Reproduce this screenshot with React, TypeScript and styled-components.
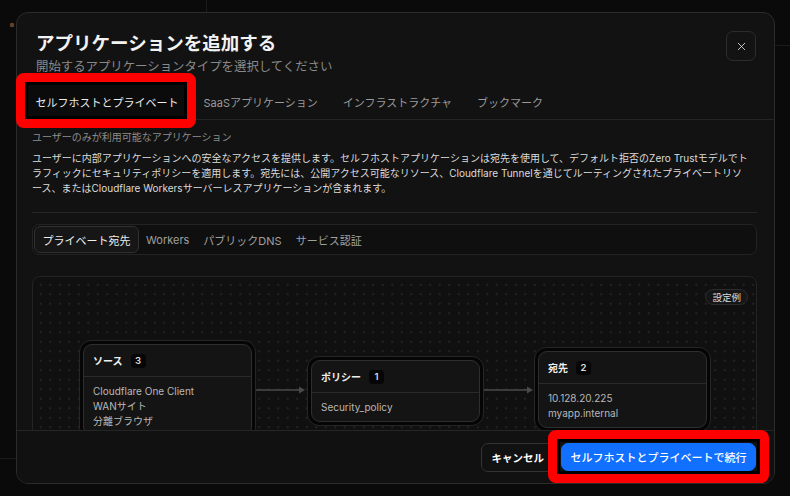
import React from "react";
import styled, { createGlobalStyle } from "styled-components";
import { X } from "lucide-react";

const GlobalStyle = createGlobalStyle`
  html, body {
    margin: 0;
    padding: 0;
    background: #0a0a0a;
  }
  body {
    font-family: "Inter", "Noto Sans CJK JP", sans-serif;
    -webkit-font-smoothing: antialiased;
  }
  * {
    box-sizing: border-box;
  }
`;

/* 背後のページ（うっすら見える線とロゴ） */
const Page = styled.div`
  position: relative;
  width: 790px;
  height: 496px;
  overflow: hidden;
  padding: 12px 15px 12px 16px;
  background-color: #0a0a0a;
  background-image:
    radial-gradient(circle at 12px 25px, #5e4126 0 2px, transparent 2.6px),
    linear-gradient(#1b1b1b, #1b1b1b),
    linear-gradient(#1b1b1b, #1b1b1b),
    linear-gradient(#1b1b1b, #1b1b1b);
  background-repeat: no-repeat;
  background-size: 100% 100%, 1px 12px, 15px 1px, 16px 1px;
  background-position: 0 0, 206px 0, 775px 45px, 0 458px;
`;

/* ダイアログ本体 */
const Modal = styled.div`
  width: 759px;
  height: 472px;
  display: flex;
  flex-direction: column;
  background: #121212;
  border: 1px solid #2b2b2b;
  border-radius: 12px;
  overflow: hidden;
`;

const Header = styled.header`
  display: flex;
  justify-content: space-between;
  align-items: flex-start;
  padding: 17px 18px 0 19px;
`;

const Title = styled.h1`
  margin: 0;
  font-size: 18.5px;
  line-height: 26px;
  font-weight: 700;
  color: #f2f2f2;
`;

const Subtitle = styled.p`
  margin: 2px 0 0;
  font-size: 12.4px;
  line-height: 18px;
  color: #8a8a8a;
`;

const CloseButton = styled.button`
  width: 30px;
  height: 30px;
  margin-top: 1px;
  padding: 0;
  display: flex;
  align-items: center;
  justify-content: center;
  border: 1px solid #2c2c2c;
  border-radius: 7px;
  background: #131313;
  color: #dcdcdc;
`;

/* 上部タブ */
const Tabs = styled.nav`
  display: flex;
  gap: 6px;
  margin-top: 8px;
  padding: 0 9px;
  border-bottom: 1px solid #242424;
`;

const Tab = styled.div<{ $active?: boolean }>`
  position: relative;
  height: 35px;
  display: flex;
  align-items: center;
  padding: 0 9.5px;
  font-size: 11px;
  white-space: nowrap;
  color: ${(p) => (p.$active ? "#ececec" : "#9a9a9a")};
  background: ${(p) => (p.$active ? "#0b0b0b" : "transparent")};

  &::after {
    content: "";
    display: ${(p) => (p.$active ? "block" : "none")};
    position: absolute;
    left: 3px;
    right: 4px;
    bottom: 1px;
    height: 2px;
    background: #1f6fe0;
  }
`;

const Body = styled.div`
  flex: 1;
  min-height: 0;
  overflow: hidden;
  padding: 10px 17px 0 15px;
`;

const SectionLabel = styled.p`
  margin: 0;
  font-size: 10px;
  line-height: 15px;
  color: #8d8d8d;
`;

const Description = styled.p`
  margin: 6px 0 0;
  font-size: 10px;
  line-height: 15px;
  color: #dcdcdc;
  white-space: nowrap;
`;

const Divider = styled.hr`
  margin: 16px 0 0;
  border: 0;
  border-top: 1px solid #262626;
`;

/* サブタブ */
const SubTabs = styled.div`
  margin-top: 11px;
  height: 31px;
  display: flex;
  align-items: center;
  padding: 0 1px;
  border: 1px solid #232323;
  border-radius: 7px;
  background: #0f0f0f;
`;

const SubTab = styled.div<{ $active?: boolean }>`
  height: 27px;
  display: flex;
  align-items: center;
  padding: 0 ${(p) => (p.$active ? 7.5 : 6)}px;
  border-radius: 6px;
  font-size: 11px;
  white-space: nowrap;
  color: ${(p) => (p.$active ? "#eeeeee" : "#a0a0a0")};
  border: 1px solid ${(p) => (p.$active ? "#303030" : "transparent")};
  background: ${(p) => (p.$active ? "#161616" : "transparent")};
`;

/* ダイアグラム */
const Canvas = styled.div`
  position: relative;
  margin-top: 21px;
  height: 260px;
  border: 1px solid #232323;
  border-radius: 8px;
  background-color: #101010;
  background-image: radial-gradient(circle, #242424 0.8px, transparent 1.3px);
  background-size: 9.5px 9.5px;
  background-position: 3px 3px;
`;

const ExampleBadge = styled.span`
  position: absolute;
  top: 12px;
  right: 8px;
  height: 16px;
  padding: 0 6px;
  display: flex;
  align-items: center;
  border: 1px solid #2c2c2c;
  border-radius: 8px;
  background: #161616;
  font-size: 9.5px;
  color: #dddddd;
`;

const Wires = styled.svg`
  position: absolute;
  inset: 0;
  width: 100%;
  height: 100%;
  pointer-events: none;
`;

const NodeFrame = styled.div<{ $x: number; $y: number }>`
  position: absolute;
  left: ${(p) => p.$x}px;
  top: ${(p) => p.$y}px;
  width: 177px;
  padding: 3px;
  border: 1px solid #262626;
  border-radius: 12px;
  background: #050505;
`;

const NodeCard = styled.div`
  border: 1px solid #2e2e2e;
  border-radius: 9px;
  background: #141414;
  overflow: hidden;
`;

const NodeHeader = styled.div`
  height: 32px;
  display: flex;
  align-items: center;
  gap: 8px;
  padding: 0 9px;
  border-bottom: 1px solid #2a2a2a;
  font-size: 10px;
  font-weight: 600;
  color: #eeeeee;
`;

const Count = styled.span`
  min-width: 15px;
  height: 14px;
  padding: 0 4px;
  display: inline-flex;
  align-items: center;
  justify-content: center;
  border-radius: 4px;
  background: #060606;
  font-size: 9.5px;
  font-weight: 600;
  color: #dddddd;
`;

const NodeBody = styled.div`
  padding: 7px 9px 6px;
`;

const NodeItem = styled.div`
  font-size: 10px;
  line-height: 15px;
  color: #b8b8b8;
  white-space: nowrap;
`;

/* フッター */
const Footer = styled.footer`
  height: 53px;
  flex-shrink: 0;
  display: flex;
  justify-content: flex-end;
  align-items: center;
  gap: 6px;
  padding: 0 18px;
  border-top: 1px solid #262626;
  background: #111111;
`;

const Button = styled.button<{ $primary?: boolean }>`
  height: ${(p) => (p.$primary ? 28 : 29)}px;
  padding: 0 ${(p) => (p.$primary ? 8.5 : 10)}px;
  border-radius: 7px;
  font-family: inherit;
  font-size: ${(p) => (p.$primary ? 11 : 10.5)}px;
  font-weight: ${(p) => (p.$primary ? 500 : 700)};
  color: #ffffff;
  border: 1px solid ${(p) => (p.$primary ? "#1170ff" : "#333333")};
  background: ${(p) => (p.$primary ? "#1170ff" : "#111111")};
`;

/* 赤い注釈枠 */
const Highlight = styled.div<{ $x: number; $y: number; $w: number; $h: number }>`
  position: absolute;
  left: ${(p) => p.$x}px;
  top: ${(p) => p.$y}px;
  width: ${(p) => p.$w}px;
  height: ${(p) => p.$h}px;
  border: 9px solid #ff0000;
  border-radius: 8px;
  box-shadow: inset 0 0 0 3px #000;
  pointer-events: none;
`;

type FlowNode = {
  title: string;
  items: string[];
  x: number;
  y: number;
};

const nodes: FlowNode[] = [
  { title: "ソース", items: ["Cloudflare One Client", "WANサイト", "分離ブラウザ"], x: 46, y: 63 },
  { title: "ポリシー", items: ["Security_policy"], x: 274, y: 79 },
  { title: "宛先", items: ["10.128.20.225", "myapp.internal"], x: 501, y: 70 },
];

const Arrow: React.FC<{ from: number; to: number; y: number }> = ({ from, to, y }) => (
  <g>
    <line x1={from} y1={y} x2={to - 5} y2={y} stroke="#4a4a4a" strokeWidth={1.5} />
    <polygon points={`${to - 6},${y - 3.5} ${to},${y} ${to - 6},${y + 3.5}`} fill="#4a4a4a" />
  </g>
);

const App: React.FC = () => {
  return (
    <>
      <GlobalStyle />
      <Page>
        <Modal>
          <Header>
            <div>
              <Title>アプリケーションを追加する</Title>
              <Subtitle>開始するアプリケーションタイプを選択してください</Subtitle>
            </div>
            <CloseButton aria-label="閉じる">
              <X size={13} strokeWidth={1.6} />
            </CloseButton>
          </Header>

          <Tabs>
            <Tab $active>セルフホストとプライベート</Tab>
            <Tab>SaaSアプリケーション</Tab>
            <Tab>インフラストラクチャ</Tab>
            <Tab>ブックマーク</Tab>
          </Tabs>

          <Body>
            <SectionLabel>ユーザーのみが利用可能なアプリケーション</SectionLabel>
            <Description>
              ユーザーに内部アプリケーションへの安全なアクセスを提供します。セルフホストアプリケーションは宛先を使用して、デフォルト拒否のZero Trustモデルでト
              <br />
              ラフィックにセキュリティポリシーを適用します。宛先には、公開アクセス可能なリソース、Cloudflare Tunnelを通じてルーティングされたプライベートリソ
              <br />
              ース、またはCloudflare Workersサーバーレスアプリケーションが含まれます。
            </Description>
            <Divider />

            <SubTabs>
              <SubTab $active>プライベート宛先</SubTab>
              <SubTab>Workers</SubTab>
              <SubTab>パブリックDNS</SubTab>
              <SubTab>サービス認証</SubTab>
            </SubTabs>

            <Canvas>
              <ExampleBadge>設定例</ExampleBadge>
              <Wires>
                <Arrow from={223} to={272} y={113} />
                <Arrow from={450} to={500} y={113} />
              </Wires>
              {nodes.map((node) => (
                <NodeFrame key={node.title} $x={node.x} $y={node.y}>
                  <NodeCard>
                    <NodeHeader>
                      {node.title}
                      <Count>{node.items.length}</Count>
                    </NodeHeader>
                    <NodeBody>
                      {node.items.map((item) => (
                        <NodeItem key={item}>{item}</NodeItem>
                      ))}
                    </NodeBody>
                  </NodeCard>
                </NodeFrame>
              ))}
            </Canvas>
          </Body>

          <Footer>
            <Button>キャンセル</Button>
            <Button $primary>セルフホストとプライベートで続行</Button>
          </Footer>
        </Modal>

        <Highlight $x={16} $y={73} $w={180} $h={55} />
        <Highlight $x={548} $y={430} $w={221} $h={53} />
      </Page>
    </>
  );
};

export default App;
